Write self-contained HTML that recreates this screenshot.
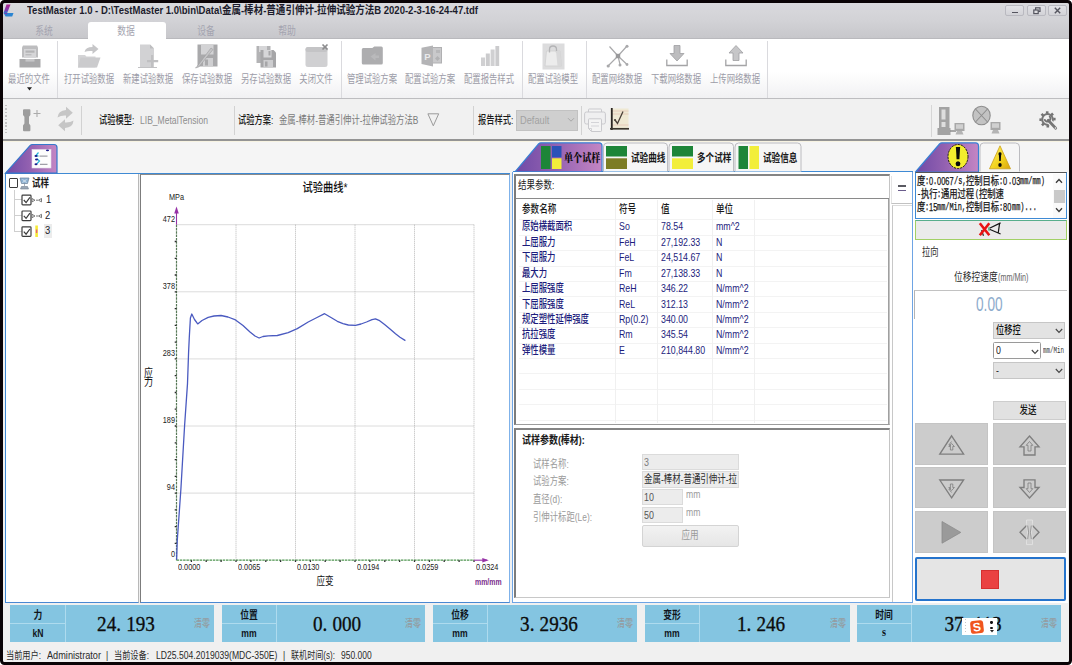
<!DOCTYPE html>
<html lang="zh-CN">
<head>
<meta charset="utf-8">
<title>TestMaster 1.0</title>
<style>
*{box-sizing:border-box;margin:0;padding:0}
html,body{width:1072px;height:665px;overflow:hidden;background:#fff}
body{font-family:"Liberation Sans","Noto Sans CJK SC",sans-serif;font-size:10px;color:#222;position:relative}
#frame{position:absolute;left:0;top:0;width:1071.5px;height:664.5px;border:3px solid #0a0306;border-radius:4.500px;box-shadow:0 0 0 12px #fff;z-index:50;pointer-events:none}
#win{position:absolute;left:0;top:0;width:1072px;height:665px;background:#f0f0f0;overflow:hidden}
#win div,#win span,#win svg{position:absolute}
.t{white-space:nowrap;line-height:1;transform-origin:0 50%}
.c{transform-origin:50% 50%}
.r{transform-origin:100% 50%}
#title{left:0;top:0;width:1072px;height:21px;background:linear-gradient(#dadade,#d2d2d6)}
#tabrow{left:0;top:21px;width:1072px;height:17.500px;background:linear-gradient(#d2d2d6,#c7c7cb);border-bottom:1px solid #b9b9bd}
#ribbon{left:0;top:38.5px;width:1072px;height:60.5px;background:linear-gradient(#fff 55%,#f1f1f3);border-bottom:1px solid #bdbdc0}
.rl{transform-origin:50% 50%;font-size:11px;color:#9c9ca8;transform:translateX(-50%) scaleX(.76);top:74px}
.rsep{top:41px;width:1px;height:57px;background:#dadade}
#tb2{left:0;top:99.5px;width:1072px;height:41.5px;background:#f1f1f1;border-bottom:2px solid #949494}
#tabstrip{left:0;top:141px;width:1072px;height:32px;background:#f5f5f5}
.wb{top:4.5px;width:19px;height:11px;border:1px solid #b9b9c0;border-radius:2px;background:linear-gradient(#e2e2e6,#d2d2d7)}
.tab{transform-origin:50% 50%;font-size:11px;color:#a4a4b0;transform:translateX(-50%) scaleX(.8);top:25.800px;margin-left:-1px}
.num{font-family:'Liberation Serif','Noto Serif CJK SC',serif}
.d{font-style:normal;display:inline-block;width:.52em;text-align:left}
</style>
</head>
<body>
<div id="win">
<div id="title"></div>
<svg style="left:2.200px;top:4px" width="16" height="14" viewBox="0 0 16 14"><defs><linearGradient id="lg1" x1="0" y1="0" x2="0" y2="1"><stop offset="0" stop-color="#b0208c"/><stop offset=".7" stop-color="#7a3ab0"/><stop offset="1" stop-color="#2a7fd0"/></linearGradient></defs><path d="M4.5 0.5 L8.5 0.5 L5.2 9 L1.5 9 Z" fill="url(#lg1)"/><path d="M1.5 9 L5 9 L11.5 9 L10.2 12.5 L3.6 12.5 Z" fill="#2a84d2"/><path d="M1.5 9 L5.2 9 L4.6 10.6 Z" fill="#7a3ab0"/></svg>
<span class="t" style="left:27px;top:5.300px;font-size:11.5px;font-weight:bold;color:#1c1c2c;transform:scaleX(.828)">TestMaster 1.0 - D:\TestMaster 1.0\bin\Data\金属-棒材-普通引伸计-拉伸试验方法B 2020-2-3-16-24-47.tdf</span>
<div class="wb" style="left:1004.5px"><div style="left:6px;top:6px;width:6px;height:1.5px;background:#55555f"></div></div>
<div class="wb" style="left:1026.5px"><svg style="left:5px;top:1px" width="8" height="8" viewBox="0 0 8 8"><rect x="2.6" y="0.8" width="4.4" height="3.6" fill="none" stroke="#55555f" stroke-width="1.2"/><rect x="0.8" y="3" width="4.4" height="3.6" fill="#dcdce0" stroke="#55555f" stroke-width="1.2"/></svg></div>
<div class="wb" style="left:1047.5px"><svg style="left:5.5px;top:1.5px" width="7" height="7" viewBox="0 0 7 7"><path d="M0.8 0.8 L6.2 6.2 M6.2 0.8 L0.8 6.2" stroke="#55555f" stroke-width="1.4"/></svg></div>
<div id="tabrow"></div>
<div style="left:88px;top:21.5px;width:77.5px;height:18px;background:#fff;border-radius:3px 3px 0 0"></div>
<span class="t tab" style="left:45px">系统</span>
<span class="t tab" style="left:127px">数据</span>
<span class="t tab" style="left:207px">设备</span>
<span class="t tab" style="left:288px">帮助</span>
<div id="ribbon"></div>
<div class="rsep" style="left:57px"></div>
<div class="rsep" style="left:340.5px"></div>
<div class="rsep" style="left:521.5px"></div>
<div class="rsep" style="left:586px"></div>
<div class="rsep" style="left:767px"></div>
<!-- ribbon icons -->
<svg style="left:19px;top:44px" width="22" height="25" viewBox="0 0 22 25"><path d="M4 1.5 h14 l1 2 v10 h-16 v-10 z" fill="#bdbdbf"/><rect x="5" y="5" width="12" height="9" fill="#d6d6d8"/><rect x="6.5" y="6.5" width="9" height="2.2" fill="#b4b4b6"/><rect x="6.5" y="10" width="6" height="1.4" fill="#bcbcbe"/><path d="M0.5 15 h21 v8.5 h-21 z" fill="#a8a8aa"/><rect x="6.500" y="15" width="9" height="2.600" fill="#c6c6c8"/></svg>
<svg style="left:27px;top:87px" width="5" height="4" viewBox="0 0 5 4"><path d="M0 0.3 h5 l-2.5 3.2 z" fill="#222"/></svg>
<svg style="left:77px;top:43px" width="25" height="26" viewBox="0 0 25 26"><path d="M1 12 h7 l1.5 1.5 h9 v11 h-17.5 z" fill="#d4d4d6"/><path d="M3.5 14.5 h20 l-3.5 10 h-19 z" fill="#cbcbcd"/><path d="M7.5 9 q1 -5 8 -5 v-3 l6 5 l-6 5 v-3 q-5 -0.5 -8 1 z" fill="#c6c6c8"/></svg>
<svg style="left:137px;top:43px" width="24" height="26" viewBox="0 0 24 26"><path d="M3 1.5 h10 l4 4 v18.5 h-14 z" fill="#d2d2d4"/><path d="M13 1.5 v4 h4 z" fill="#bdbdbf"/><path d="M1 24 h19 v1 h-19 z" fill="#c2c2c4"/><path d="M14 12 v5 h-4 v2.2 h4 v5 h2.2 v-5 h5 v-2.200 h-5 v-5 z" fill="#c0c0c2"/></svg>
<svg style="left:195px;top:43px" width="24" height="26" viewBox="0 0 24 26"><path d="M2.5 1.5 h20 v22 h-20 z" fill="#a9a9ab"/><rect x="6" y="1.500" width="12.500" height="10" fill="#d3d3d5"/><rect x="8" y="15" width="10" height="8.5" fill="#cfcfd1"/><rect x="10" y="16.500" width="3" height="6" fill="#a9a9ab"/><path d="M16 5 L2 23.500 L0.500 25 L4 23.800 L18 6.500 z" fill="#c4c4c6" stroke="#9c9c9e" stroke-width=".6"/></svg>
<svg style="left:255px;top:44px" width="23" height="25" viewBox="0 0 23 25"><path d="M1.500 2 h14 v17 h-14 z" fill="#b3b3b5"/><rect x="4" y="2" width="8" height="6" fill="#d6d6d8"/><path d="M5.500 6 h13 l2.500 2.500 v15 h-15.500 z" fill="#a6a6a8"/><rect x="8.500" y="6" width="8" height="7.500" fill="#d6d6d8"/><rect x="13.500" y="7" width="2" height="4.500" fill="#a6a6a8"/><rect x="8.500" y="16" width="9.500" height="7.500" fill="#cdcdcf"/><rect x="10" y="17.500" width="2.500" height="5" fill="#a6a6a8"/></svg>
<svg style="left:304px;top:43px" width="26" height="26" viewBox="0 0 26 26"><rect x="1.500" y="4" width="22" height="20" rx="2.500" fill="#d0d0d2"/><rect x="1.500" y="4" width="22" height="5" rx="2.500" fill="#c4c4c6"/><path d="M18.500 1.500 L23.500 6.500 M23.500 1.500 L18.500 6.500" stroke="#8c8c8e" stroke-width="1.700"/></svg>
<svg style="left:361px;top:46px" width="23" height="20" viewBox="0 0 23 20"><path d="M0.800 3.500 q0 -1.500 1.500 -1.500 h9 l2 -1.500 h7 q1.500 0 1.500 1.500 v15 q0 1.500 -1.500 1.500 h-18 q-1.500 0 -1.500 -1.500 z" fill="#adadaf"/><path d="M9.500 10.500 l5 -3.500 v2.500 h3.500 v2.500 h-3.500 v2.500 z" fill="#b9b9bb"/></svg>
<svg style="left:420px;top:44px" width="23" height="24" viewBox="0 0 23 24"><rect x="7" y="3.500" width="14.500" height="15.500" fill="#c9c9cb" stroke="#b0b0b2" stroke-width="1"/><path d="M1.500 3.800 L13 1.500 V22.500 L1.500 20 Z" fill="#b4b4b6"/><text x="4.300" y="15.500" font-family="Liberation Sans,sans-serif" font-size="9.500" font-weight="bold" fill="#e9e9eb">P</text><path d="M17.500 12 l2.500 2.500 l-2.500 2.500 l-2.500 -2.500 z" fill="#b2b2b4"/><rect x="16" y="6" width="4" height="3" fill="#b8b8ba"/></svg>
<svg style="left:480px;top:45px" width="20" height="22" viewBox="0 0 20 22"><rect x="1" y="12.500" width="4" height="8.500" fill="#d0d0d2"/><rect x="5.800" y="8.500" width="4" height="12.500" fill="#cbcbcd"/><rect x="10.600" y="4.500" width="4" height="16.500" fill="#d0d0d2"/><rect x="15.400" y="1" width="3.800" height="20" fill="#cbcbcd"/></svg>
<svg style="left:542px;top:43px" width="23" height="27" viewBox="0 0 23 27"><rect x="0.500" y="0.500" width="22" height="26" fill="#dcdcdd"/><path d="M4.500 8 h13.500 l1.500 15 h-16.500 z" fill="#ececec" stroke="#cfcfd0" stroke-width=".8"/><path d="M7.500 9.500 v-3 q0 -3.500 3.500 -3.500 q3.500 0 3.500 3.500 v3" fill="none" stroke="#b4b4b6" stroke-width="1.300"/><path d="M14 8 l4 0 l1.500 15 l-4 0 z" fill="#d8d8d9"/></svg>
<svg style="left:606px;top:44px" width="24" height="24" viewBox="0 0 24 24"><path d="M3.500 2.500 L12 12 L21 2 M12 12 L2 22 M12 12 L14 20.500 M12 12 L20.500 20" stroke="#a9a9ab" stroke-width="1.200" fill="none"/><rect x="9.800" y="9.800" width="4.400" height="4.400" fill="#99999b"/><circle cx="21" cy="2.200" r="1.500" fill="#a9a9ab"/><circle cx="2.200" cy="22" r="1.600" fill="#a9a9ab"/><circle cx="14" cy="21" r="1.500" fill="#a9a9ab"/><circle cx="21" cy="20.500" r="1.400" fill="#a9a9ab"/></svg>
<svg style="left:665px;top:44px" width="24" height="24" viewBox="0 0 24 24"><path d="M9 1.500 h6 v8 h4 l-7 7.500 l-7 -7.500 h4 z" fill="#bdbdbf" stroke="#a0a0a2" stroke-width=".8"/><path d="M1.800 15.500 v6 h20.400 v-6" fill="none" stroke="#a4a4a6" stroke-width="1.300"/></svg>
<svg style="left:724px;top:44px" width="24" height="24" viewBox="0 0 24 24"><path d="M9 16.500 h6 v-7.500 h4 l-7 -7.500 l-7 7.500 h4 z" fill="#c6c6c8" stroke="#a0a0a2" stroke-width=".8"/><path d="M1.800 15.500 v6 h20.400 v-6" fill="none" stroke="#a4a4a6" stroke-width="1.300"/></svg>
<!-- ribbon labels -->
<span class="t rl" style="left:29px">最近的文件</span>
<span class="t rl" style="left:88.800px">打开试验数据</span>
<span class="t rl" style="left:147.800px">新建试验数据</span>
<span class="t rl" style="left:206.700px">保存试验数据</span>
<span class="t rl" style="left:265.700px">另存试验数据</span>
<span class="t rl" style="left:315.900px">关闭文件</span>
<span class="t rl" style="left:371.500px">管理试验方案</span>
<span class="t rl" style="left:430.300px">配置试验方案</span>
<span class="t rl" style="left:489.200px">配置报告样式</span>
<span class="t rl" style="left:553.400px">配置试验模型</span>
<span class="t rl" style="left:617px">配置网络数据</span>
<span class="t rl" style="left:676px">下载网络数据</span>
<span class="t rl" style="left:734.700px">上传网络数据</span>
<div id="tb2"></div>
<div style="left:5px;top:105px;width:2px;height:28px;background:repeating-linear-gradient(#c4c4c4 0 1.500px,transparent 1.500px 3.400px)"></div>
<svg style="left:21px;top:108px" width="22" height="25" viewBox="0 0 22 25"><path d="M2 2.200 q0 -1 1 -1 h5.400 q1 0 1 1 v4.800 l-1.400 1.800 v6.800 l1.400 1.800 v4.800 q0 1 -1 1 h-5.400 q-1 0 -1 -1 v-4.800 l1.400 -1.800 v-6.800 l-1.400 -1.800 z" fill="#9d9d9d"/><path d="M16 2 v7 M12.500 5.500 h7" stroke="#ababab" stroke-width="1.100"/></svg>
<svg style="left:56px;top:106px" width="19" height="26" viewBox="0 0 19 26"><path d="M1.500 11.500 q0.500 -7 8.500 -7.500 v-3.200 l6.800 6 l-6.800 6 v-3.200 q-5 -0.300 -8.500 1.900 z" fill="#c6c6c6"/><path d="M17.500 14.500 q-0.500 7 -8.500 7.500 v3.200 l-6.800 -6 l6.800 -6 v3.200 q5 0.300 8.500 -1.900 z" fill="#c6c6c6"/></svg>
<div style="left:80.500px;top:106px;width:1px;height:29px;background:#d2d2d2"></div>
<span class="t" style="left:99px;top:115px;font-size:11px;color:#1a1a1a;font-weight:500;transform:scaleX(.75)">试验模型:</span>
<span class="t" style="left:140px;top:115px;font-size:10.500px;color:#8e8e8e;transform:scaleX(.815)">LIB_MetalTension</span>
<div style="left:233.500px;top:106px;width:1px;height:29px;background:#d2d2d2"></div>
<span class="t" style="left:238px;top:115px;font-size:11px;color:#1a1a1a;font-weight:500;transform:scaleX(.75)">试验方案:</span>
<span class="t" style="left:279px;top:115px;font-size:11px;color:#7a7a7a;transform:scaleX(.76)">金属-棒材-普通引伸计-拉伸试验方法B</span>
<svg style="left:427px;top:113px" width="13" height="14" viewBox="0 0 13 14"><path d="M0.900 0.800 h10.800 l-5.400 12 z" fill="none" stroke="#9a9a9a" stroke-width="1"/></svg>
<div style="left:473px;top:106px;width:1px;height:29px;background:#d2d2d2"></div>
<span class="t" style="left:477.500px;top:115px;font-size:11px;color:#1a1a1a;font-weight:500;transform:scaleX(.75)">报告样式:</span>
<div style="left:516px;top:109.500px;width:61.500px;height:21px;background:#cfcfcf;border:1px solid #c2c2c2"></div>
<span class="t" style="left:519.500px;top:115px;font-size:11px;color:#a2a2a2;transform:scaleX(.84)">Default</span>
<svg style="left:567px;top:117px" width="8" height="6" viewBox="0 0 8 6"><path d="M1 1.200 l3 3 l3 -3" fill="none" stroke="#a8a8a8" stroke-width="1"/></svg>
<div style="left:580.500px;top:106px;width:1px;height:29px;background:#d2d2d2"></div>
<svg style="left:584px;top:108px" width="22" height="25" viewBox="0 0 22 25"><path d="M4.500 4 v-2.300 q0 -0.700 0.700 -0.700 h11.600 q0.700 0 0.700 0.700 v2.300" fill="#f4f4f4" stroke="#c9c9cd" stroke-width="1"/><rect x="0.600" y="4" width="20.800" height="12" rx="1.800" fill="#efeff0" stroke="#c9c9cd" stroke-width="1"/><path d="M4.500 11.500 q0 -0.700 0.700 -0.700 h11.600 q0.700 0 0.700 0.700 v11.300 q0 0.700 -0.700 0.700 h-9.300 l-3 -3 z" fill="#f4f4f4" stroke="#c9c9cd" stroke-width="1"/><path d="M7 14.500 h8 M7 18 h8" stroke="#d4d4d8" stroke-width="1"/><path d="M4.500 20.500 h3 v3" fill="none" stroke="#c9c9cd" stroke-width=".8"/></svg>
<svg style="left:609px;top:107px" width="21" height="24" viewBox="0 0 21 24"><rect x="1.500" y="1.500" width="18" height="20.500" fill="#efe9d3"/><path d="M3 4 h16.500 M3 7 h16.500 M3 18 h16.500" stroke="#e6c8b8" stroke-width=".9"/><path d="M6 13 L8.500 16.500 L14 4.500" fill="none" stroke="#4a4038" stroke-width="1.300"/><circle cx="6" cy="13" r="1.100" fill="#4a4038"/><path d="M2.800 1 v22" stroke="#2a2622" stroke-width="1.800"/><path d="M1 21.800 h19" stroke="#3a362c" stroke-width="1.700"/></svg>
<!-- right icons -->
<div style="left:931px;top:105px;width:1px;height:32px;background:#d6d6d6"></div>
<svg style="left:936px;top:106px" width="30" height="30" viewBox="0 0 30 30"><path d="M3 1 h10.500 v21 h1 v7 h-13 v-7 h1.500 z" fill="#a3a3a3"/><rect x="5.500" y="3.500" width="4" height="10" fill="#dedede"/><rect x="5.500" y="16" width="4" height="5" fill="#dedede"/><path d="M14 25 h6" stroke="#8c8c8c" stroke-width="1.500"/><rect x="18.500" y="17" width="10" height="8" fill="#a8a8a8"/><rect x="20" y="18.300" width="7" height="4.500" fill="#d0d0d0"/><path d="M21 25 h5 l1.500 3.500 h-8 z" fill="#b4b4b4"/></svg>
<svg style="left:971px;top:105px" width="32" height="31" viewBox="0 0 32 31"><ellipse cx="10.500" cy="10.500" rx="8.700" ry="9.300" fill="#c3c3c3" stroke="#8e8e8e" stroke-width="1.100"/><path d="M4.500 4 L16.500 17 M16.500 4 L4.500 17" stroke="#8e8e8e" stroke-width="1.100"/><rect x="19.500" y="17" width="10" height="8" fill="#a8a8a8"/><rect x="21" y="18.300" width="7" height="4.500" fill="#d0d0d0"/><path d="M22 25 h5 l1.500 3.500 h-8 z" fill="#b4b4b4"/></svg>
<svg style="left:1036px;top:107px" width="26" height="28" viewBox="1036 107 26 28"><g fill="#727272"><rect x="1045.9" y="111.3" width="2.600" height="2.400" transform="rotate(0 1047.5 119.4)"/><rect x="1045.9" y="111.3" width="2.600" height="2.400" transform="rotate(45 1047.5 119.4)"/><rect x="1045.9" y="111.3" width="2.600" height="2.400" transform="rotate(90 1047.5 119.4)"/><rect x="1045.9" y="111.3" width="2.600" height="2.400" transform="rotate(135 1047.5 119.4)"/><rect x="1045.9" y="111.3" width="2.600" height="2.400" transform="rotate(180 1047.5 119.4)"/><rect x="1045.9" y="111.3" width="2.600" height="2.400" transform="rotate(225 1047.5 119.4)"/><rect x="1045.9" y="111.3" width="2.600" height="2.400" transform="rotate(270 1047.5 119.4)"/><rect x="1045.9" y="111.3" width="2.600" height="2.400" transform="rotate(315 1047.5 119.4)"/></g><circle cx="1047.5" cy="119.4" r="5.300" fill="#f1f1f1" stroke="#767676" stroke-width="2"/><path d="M1048.500 120.500 L1055.700 128.200" stroke="#f1f1f1" stroke-width="5.200" stroke-linecap="round"/><path d="M1048.200 120.200 L1055.700 128.200" stroke="#767676" stroke-width="2.800" stroke-linecap="round"/><path d="M1048.800 115.800 a3 3 0 1 1 -4.200 3.600" fill="none" stroke="#727272" stroke-width="1.900" transform="rotate(8 1047 118.500)"/><circle cx="1055.500" cy="128" r=".8" fill="#f1f1f1"/></svg>
<div id="tabstrip"></div>
<div style="left:0;top:141px;width:1072px;height:1px;background:#f7f3e2"></div>
<!-- blue baselines -->
<div style="left:5px;top:172.500px;width:505px;height:1.200px;background:#3f8ad4"></div>
<div style="left:513px;top:171.200px;width:399.500px;height:1.200px;background:#3f8ad4"></div>
<div style="left:914.500px;top:171.500px;width:153px;height:1.200px;background:#3f8ad4"></div>
<svg style="left:0;top:141px" width="1072" height="34" viewBox="0 141 1072 34">
<defs>
<linearGradient id="pg1" x1="0" y1="0" x2="1" y2="0"><stop offset="0" stop-color="#6f4aa6"/><stop offset=".45" stop-color="#9260b0"/><stop offset="1" stop-color="#c486c4"/></linearGradient>
<linearGradient id="wg" x1="0" y1="0" x2="1" y2="1"><stop offset="0" stop-color="#fff36a"/><stop offset=".6" stop-color="#f2d21c"/><stop offset="1" stop-color="#d9a410"/></linearGradient>
</defs>
<!-- left tab -->
<path d="M5.500 173.200 L30 145.600 Q31 144.500 32.500 144.500 H54 Q57 144.500 57 147.500 V173.200 Z" fill="url(#pg1)" stroke="#3578cc" stroke-width="1.200"/>
<rect x="32" y="149.500" width="19" height="18.500" fill="#fdfdfd" stroke="#e4dcec" stroke-width=".6"/>
<g>
<path d="M38.500 152.500 L35.800 155.600 L38.500 156.200" fill="none" stroke="#22b4d8" stroke-width="1.200"/>
<path d="M37 158.700 L39.500 161 L36.500 164.200" fill="none" stroke="#22b4d8" stroke-width="1.200"/>
<ellipse cx="36" cy="156" rx="1.500" ry="1" fill="#1c1c8c"/><ellipse cx="36.500" cy="159.500" rx="1.500" ry="1" fill="#1c1c8c"/><ellipse cx="36" cy="164.300" rx="1.500" ry="1" fill="#1c1c8c"/><ellipse cx="47.500" cy="150.300" rx="1.600" ry="0.900" fill="#1c1c8c"/>
<path d="M39.500 156.200 H47.500 M40 164.300 H47.500" stroke="#a0a0a8" stroke-width="1.200"/>
</g>
<!-- middle tabs: inactive first -->
<g fill="#f6f6f6" stroke="#bcbcc0" stroke-width="1">
<path d="M603.500 171.500 V147 Q603.500 143 607 143 H664 Q667.500 143 667.500 146.500 V171.500"/>
<path d="M669 171.500 V147 Q669 143 672.500 143 H730 Q733.500 143 733.500 146.500 V171.500"/>
<path d="M735 171.500 V147 Q735 143 738.500 143 H797.500 Q801 143 801 146.500 V171.500"/>
</g>
<path d="M515 171.800 L538.500 144 Q539.500 142.800 541 142.800 H599 Q602 142.800 602 145.800 V171.800 Z" fill="url(#pg1)" stroke="#3a80d4" stroke-width="1.200"/>
<rect x="541" y="146" width="9.500" height="23" fill="#1d8538"/><rect x="552" y="146" width="9.500" height="11.300" fill="#2a52b8"/><rect x="552" y="158.300" width="9.500" height="10.700" fill="#f2ee3a"/>
<rect x="606" y="146" width="21" height="10.500" fill="#1d8538"/><rect x="606" y="158.300" width="21" height="10.700" fill="#7c7c24"/>
<rect x="672" y="146" width="21" height="10.500" fill="#1d8538"/><rect x="672" y="158.300" width="21" height="10.700" fill="#f2ee3a"/>
<rect x="738.500" y="146" width="9.500" height="23" fill="#1d8538"/><rect x="749.500" y="146" width="9.500" height="23" fill="#f2ee3a"/>
<!-- right tabs -->
<path d="M980 171.500 V147 Q980 143 983.500 143 H1015.500 Q1019.500 143 1019.500 147 V171.500" fill="#f6f6f6" stroke="#bcbcc0" stroke-width="1"/>
<path d="M915.500 172 L939.500 144 Q940.500 142.800 942 142.800 H975.500 Q978.500 142.800 978.500 145.800 V172 Z" fill="url(#pg1)" stroke="#3a80d4" stroke-width="1.200"/>
<ellipse cx="958" cy="156.500" rx="10" ry="12" fill="#f4ee2e" stroke="#1a1a10" stroke-width="1" stroke-dasharray="2.200 1"/>
<path d="M955.900 147 h4.200 l-0.700 12.300 h-2.800 z" fill="#0a0a0a"/><ellipse cx="958" cy="163.800" rx="2.400" ry="2.500" fill="#0a0a0a"/>
<path d="M1000 145.800 L1010.500 168.800 H989.500 Z" fill="url(#wg)" stroke="#caa018" stroke-width=".8" stroke-linejoin="round"/>
<path d="M998.800 152.500 h2.400 l-0.400 8.500 h-1.600 z" fill="#0a0a0a"/><circle cx="1000" cy="154" r="1.500" fill="#0a0a0a"/><ellipse cx="1000" cy="165" rx="1.700" ry="1.900" fill="#0a0a0a"/>
</svg>
<span class="t" style="left:564px;top:152.500px;font-size:11.500px;font-weight:900;color:#0a0a0a;font-family:'Liberation Serif','Noto Serif CJK SC',serif;transform:scaleX(.79)">单个试样</span>
<span class="t" style="left:631px;top:152.500px;font-size:11px;font-weight:bold;color:#1a1a1a;transform:scaleX(.78)">试验曲线</span>
<span class="t" style="left:697px;top:152.500px;font-size:11px;font-weight:bold;color:#1a1a1a;transform:scaleX(.78)">多个试样</span>
<span class="t" style="left:763px;top:152.500px;font-size:11px;font-weight:bold;color:#1a1a1a;transform:scaleX(.78)">试验信息</span>
<!-- left tree panel -->
<div style="left:5px;top:173.700px;width:133.500px;height:429.300px;background:#fff;border-left:1.200px solid #3f8ad4;border-bottom:1.500px solid #4a88d2;border-right:1px solid #b8b8b8"></div>
<div style="left:13.500px;top:190px;width:1px;height:41.500px;background:#cfcfcf"></div>
<div style="left:13.500px;top:199px;width:8px;height:1px;background:#cfcfcf"></div>
<div style="left:13.500px;top:215px;width:8px;height:1px;background:#cfcfcf"></div>
<div style="left:13.500px;top:231px;width:8px;height:1px;background:#cfcfcf"></div>
<div style="left:8.800px;top:177.800px;width:9px;height:10.200px;border:1.200px solid #3c3c3c;background:#fff;border-radius:1px"></div>
<svg style="left:18.500px;top:177px" width="11" height="13" viewBox="0 0 11 13"><path d="M1 1 h9 l-1.500 5.500 h-6 z" fill="#8fb4d4" stroke="#6a7f98" stroke-width=".7"/><path d="M3.500 2.500 l4 3 M7.500 2.500 l-4 3" stroke="#e8eef4" stroke-width=".7"/><path d="M5.500 6.500 v2.500 M2.500 9.500 h6 l1 2.500 h-8 z" fill="#9aa6b4" stroke="#74808e" stroke-width=".6"/></svg>
<span class="t" style="left:31.800px;top:177.500px;font-size:11.500px;font-weight:bold;color:#1a1a1a;transform:scaleX(.74)">试样</span>
<svg style="left:21px;top:193.500px" width="32" height="44" viewBox="0 0 32 44"><g fill="#fff" stroke="#3c3c3c" stroke-width="1.200"><rect x="1" y="1.200" width="9" height="9.600" rx=".8"/><rect x="1" y="17" width="9" height="9.600" rx=".8"/><rect x="1" y="32.800" width="9" height="9.600" rx=".8"/></g><g fill="none" stroke="#3c3c3c" stroke-width="1.200"><path d="M2.800 6 l2.300 2.600 l3.800 -5.200"/><path d="M2.800 21.800 l2.300 2.600 l3.800 -5.200"/><path d="M2.800 37.600 l2.300 2.600 l3.800 -5.200"/></g><g fill="none" stroke="#6c6c6c" stroke-width=".9"><path d="M11 4.500 l3 1.700 l-3 1.700 z M15 6.200 h2 M20.500 4.500 l-3 1.700 l3 1.700 z"/><path d="M11 20.300 l3 1.700 l-3 1.700 z M15 22 h2 M20.500 20.300 l-3 1.700 l3 1.700 z"/></g><rect x="14.300" y="31.500" width="2.600" height="11.500" fill="#f6ea38"/><rect x="14.900" y="35.500" width="1.400" height="3.500" fill="#e8607c"/></svg>
<div style="left:43.500px;top:224px;width:8px;height:13.500px;background:#ececec"></div>
<span class="t" style="left:45.500px;top:193.800px;font-size:11.500px;color:#1c1c2a;transform:scaleX(.82)">1</span>
<span class="t" style="left:45px;top:209.600px;font-size:11.500px;color:#1c1c2a;transform:scaleX(.82)">2</span>
<span class="t" style="left:45px;top:225.300px;font-size:11.500px;color:#1c1c2a;transform:scaleX(.82)">3</span>
<!-- splitter & chart panel -->
<!-- chart panel -->
<div style="left:140px;top:174px;width:369.500px;height:428.500px;background:#fff;border-left:1.500px solid #7c7c7c;border-top:1.200px solid #8a8a8a;border-right:1.200px solid #7fb2ea;border-bottom:1.500px solid #4a88d2"></div>
<svg style="left:141px;top:175px" width="368" height="426" viewBox="141 175 368 426">
<path d="M236.0 224.7 V560.2 M295.5 224.7 V560.2 M355.0 224.7 V560.2 M414.5 224.7 V560.2 M474.0 224.7 V560.2 M176.5 493.1 H474.0 M176.5 426.0 H474.0 M176.5 358.9 H474.0 M176.5 291.8 H474.0 M176.5 224.7 H474.0" stroke="#a6a6a6" stroke-width="0.8" stroke-dasharray="1 1" fill="none"/>
<path d="M176.5 224.7 V560.2" stroke="#587a58" stroke-width="1.200" stroke-dasharray="2.500 .8"/>
<path d="M176.5 560.2 H474.0" stroke="#4f9550" stroke-width="1.200" stroke-dasharray="2.500 .8"/>
<path d="M191.4 560.2 v1.800 M206.2 560.2 v1.800 M221.1 560.2 v1.800 M236.0 560.2 v1.800 M250.9 560.2 v1.800 M265.8 560.2 v1.800 M280.6 560.2 v1.800 M295.5 560.2 v1.800 M310.4 560.2 v1.800 M325.2 560.2 v1.800 M340.1 560.2 v1.800 M355.0 560.2 v1.800 M369.9 560.2 v1.800 M384.8 560.2 v1.800 M399.6 560.2 v1.800 M414.5 560.2 v1.800 M429.4 560.2 v1.800 M444.2 560.2 v1.800 M459.1 560.2 v1.800 M474.0 560.2 v1.800 M176.5 543.4 h-1.800 M176.5 526.7 h-1.800 M176.5 509.9 h-1.800 M176.5 493.1 h-1.800 M176.5 476.3 h-1.800 M176.5 459.6 h-1.800 M176.5 442.8 h-1.800 M176.5 426.0 h-1.800 M176.5 409.2 h-1.800 M176.5 392.5 h-1.800 M176.5 375.7 h-1.800 M176.5 358.9 h-1.800 M176.5 342.1 h-1.800 M176.5 325.4 h-1.800 M176.5 308.6 h-1.800 M176.5 291.8 h-1.800 M176.5 275.0 h-1.800 M176.5 258.3 h-1.800 M176.5 241.5 h-1.800" stroke="#2c2c2c" stroke-width="1.300"/>
<path d="M176.5 224.7 V208" stroke="#9632a6" stroke-width="1.100"/><path d="M176.5 206.500 l2.300 7 h-4.600 z" fill="#9632a6"/>
<path d="M474.0 560.2 H487" stroke="#9632a6" stroke-width="1.100"/><path d="M488.800 560.2 l-6.500 2.300 v-4.600 z" fill="#9632a6"/>
<path d="M176.6 559.7 L177.3 540.0 L180.9 489.0 L184.6 425.5 L187.5 383.6 L188.6 352.0 L189.3 337.3 L190.4 318.0 L191.8 314.0 L194.5 319.5 L197.7 323.9 L202.0 320.5 L208.2 317.3 L214.0 316.0 L221.0 315.5 L228.0 317.0 L235.5 319.9 L243.0 325.5 L250.0 331.9 L255.0 336.0 L259.1 338.0 L263.0 336.5 L268.2 335.9 L277.3 335.5 L288.2 332.6 L297.3 328.6 L308.2 322.0 L317.0 317.5 L324.6 313.7 L331.0 317.5 L337.3 321.3 L343.0 323.6 L348.3 325.0 L355.5 325.3 L361.0 324.0 L366.5 322.0 L372.0 319.6 L375.5 318.8 L379.0 320.3 L384.6 324.6 L390.0 329.0 L395.5 333.7 L400.0 337.2 L405.4 340.6" fill="none" stroke="#4a5ac0" stroke-width="1.300" stroke-linejoin="round"/>
</svg>
<span class="t r" style="left:175.0px;top:549.2px;font-size:9.5px;color:#222;transform:translateX(-100%) scaleX(0.77)">0</span>
<span class="t r" style="left:175.0px;top:482.1px;font-size:9.5px;color:#222;transform:translateX(-100%) scaleX(0.77)">94</span>
<span class="t r" style="left:175.0px;top:415.0px;font-size:9.5px;color:#222;transform:translateX(-100%) scaleX(0.77)">189</span>
<span class="t r" style="left:175.0px;top:347.9px;font-size:9.5px;color:#222;transform:translateX(-100%) scaleX(0.77)">283</span>
<span class="t r" style="left:175.0px;top:280.8px;font-size:9.5px;color:#222;transform:translateX(-100%) scaleX(0.77)">378</span>
<span class="t r" style="left:175.0px;top:213.7px;font-size:9.5px;color:#222;transform:translateX(-100%) scaleX(0.77)">472</span>
<span class="t" style="left:178.0px;top:562.200px;font-size:9.5px;color:#222;transform:scaleX(0.77)">0.0000</span>
<span class="t" style="left:237.5px;top:562.200px;font-size:9.5px;color:#222;transform:scaleX(0.77)">0.0065</span>
<span class="t" style="left:297.0px;top:562.200px;font-size:9.5px;color:#222;transform:scaleX(0.77)">0.0130</span>
<span class="t" style="left:356.5px;top:562.200px;font-size:9.5px;color:#222;transform:scaleX(0.77)">0.0194</span>
<span class="t" style="left:416.0px;top:562.200px;font-size:9.5px;color:#222;transform:scaleX(0.77)">0.0259</span>
<span class="t" style="left:475.5px;top:562.200px;font-size:9.5px;color:#222;transform:scaleX(0.77)">0.0324</span>
<span class="t" style="left:168.8px;top:192.3px;font-size:9.5px;color:#222;transform:scaleX(0.77)">MPa</span>
<span class="t" style="left:475.0px;top:578px;font-size:9px;color:#7a2c8c;font-weight:bold;transform:scaleX(.77)">mm/mm</span>
<span class="t c" style="left:324.9px;top:181.800px;font-size:12.5px;font-weight:500;color:#111;transform:translateX(-50%) scaleX(.82)">试验曲线*</span>
<span class="t c" style="left:324.6px;top:576px;font-size:11px;color:#111;transform:translateX(-50%) scaleX(0.78)">应变</span>
<span class="t" style="left:143.500px;top:369px;font-size:11.500px;color:#111;transform:scaleX(.78);line-height:8.500px;white-space:normal;width:12px">应<br>力</span>
<!-- middle panel -->
<div style="left:512.300px;top:172px;width:400.700px;height:431px;border:1.500px solid #6ea4e4;border-top:none;background:#fff"></div>
<div style="left:514px;top:173.700px;width:376px;height:251.300px;background:#fff;border-left:2.300px solid #7c7c7c;border-top:2.300px solid #848484;border-right:1.500px solid #c4c4c4;border-bottom:1.500px solid #9c9c9c"></div>
<div style="left:890.500px;top:176px;width:21px;height:27.500px;background:#fff;border-bottom:1.500px solid #c2c2c2;border-left:1px solid #e4e4e4"></div>
<div style="left:897.500px;top:185.300px;width:8.500px;height:1.300px;background:#5a5a62"></div>
<div style="left:897.500px;top:189.500px;width:8.500px;height:1.300px;background:#6a5c8c"></div>
<div style="left:891.500px;top:205px;width:20px;height:397px;background:#fff;border-left:1.500px solid #c8c8c8;border-top:1px solid #dcdcdc"></div>
<span class="t" style="left:518.0px;top:179.5px;font-size:11px;color:#222;transform:scaleX(0.77)">结果参数:</span>
<div style="left:516px;top:197.500px;width:372.500px;height:1.500px;background:#8a8a8a"></div>
<div style="left:887.500px;top:199px;width:1.500px;height:225px;background:#a0a0a0"></div>
<div style="left:519px;top:219.3px;width:368px;height:1px;background:#f3f3f3"></div>
<div style="left:519px;top:234.7px;width:368px;height:1px;background:#f3f3f3"></div>
<div style="left:519px;top:250.1px;width:368px;height:1px;background:#f3f3f3"></div>
<div style="left:519px;top:265.5px;width:368px;height:1px;background:#f3f3f3"></div>
<div style="left:519px;top:280.9px;width:368px;height:1px;background:#f3f3f3"></div>
<div style="left:519px;top:296.3px;width:368px;height:1px;background:#f3f3f3"></div>
<div style="left:519px;top:311.7px;width:368px;height:1px;background:#f3f3f3"></div>
<div style="left:519px;top:327.1px;width:368px;height:1px;background:#f3f3f3"></div>
<div style="left:519px;top:342.5px;width:368px;height:1px;background:#f3f3f3"></div>
<div style="left:519px;top:357.9px;width:368px;height:1px;background:#f3f3f3"></div>
<div style="left:519px;top:373.3px;width:368px;height:1px;background:#f3f3f3"></div>
<div style="left:519px;top:388.7px;width:368px;height:1px;background:#f3f3f3"></div>
<div style="left:519px;top:404.1px;width:368px;height:1px;background:#f3f3f3"></div>
<div style="left:519px;top:419.5px;width:368px;height:1px;background:#f3f3f3"></div>
<div style="left:615.0px;top:200px;width:1px;height:223px;background:#f0f0f0"></div>
<div style="left:657.0px;top:200px;width:1px;height:223px;background:#f0f0f0"></div>
<div style="left:712.0px;top:200px;width:1px;height:223px;background:#f0f0f0"></div>
<div style="left:754.0px;top:200px;width:1px;height:223px;background:#f0f0f0"></div>
<span class="t" style="left:522.0px;top:204.0px;font-size:11px;color:#1a1a1a;font-weight:500;transform:scaleX(0.78)">参数名称</span>
<span class="t" style="left:619.0px;top:204.0px;font-size:11px;color:#1a1a1a;font-weight:500;transform:scaleX(0.78)">符号</span>
<span class="t" style="left:661.0px;top:204.0px;font-size:11px;color:#1a1a1a;font-weight:500;transform:scaleX(0.78)">值</span>
<span class="t" style="left:716.0px;top:204.0px;font-size:11px;color:#1a1a1a;font-weight:500;transform:scaleX(0.78)">单位</span>
<span class="t" style="left:522.0px;top:221.4px;font-size:11px;color:#1c1c7c;font-weight:500;transform:scaleX(0.76)">原始横截面积</span>
<span class="t" style="left:619.0px;top:221.4px;font-size:10.5px;color:#1c1c7c;transform:scaleX(0.84)">So</span>
<span class="t" style="left:661.0px;top:221.4px;font-size:10.5px;color:#1c1c7c;transform:scaleX(0.84)">78.54</span>
<span class="t" style="left:716.0px;top:221.4px;font-size:10.5px;color:#1c1c7c;transform:scaleX(0.84)">mm^2</span>
<span class="t" style="left:522.0px;top:236.8px;font-size:11px;color:#1c1c7c;font-weight:500;transform:scaleX(0.76)">上屈服力</span>
<span class="t" style="left:619.0px;top:236.8px;font-size:10.5px;color:#1c1c7c;transform:scaleX(0.84)">FeH</span>
<span class="t" style="left:661.0px;top:236.8px;font-size:10.5px;color:#1c1c7c;transform:scaleX(0.84)">27,192.33</span>
<span class="t" style="left:716.0px;top:236.8px;font-size:10.5px;color:#1c1c7c;transform:scaleX(0.84)">N</span>
<span class="t" style="left:522.0px;top:252.3px;font-size:11px;color:#1c1c7c;font-weight:500;transform:scaleX(0.76)">下屈服力</span>
<span class="t" style="left:619.0px;top:252.3px;font-size:10.5px;color:#1c1c7c;transform:scaleX(0.84)">FeL</span>
<span class="t" style="left:661.0px;top:252.3px;font-size:10.5px;color:#1c1c7c;transform:scaleX(0.84)">24,514.67</span>
<span class="t" style="left:716.0px;top:252.3px;font-size:10.5px;color:#1c1c7c;transform:scaleX(0.84)">N</span>
<span class="t" style="left:522.0px;top:267.7px;font-size:11px;color:#1c1c7c;font-weight:500;transform:scaleX(0.76)">最大力</span>
<span class="t" style="left:619.0px;top:267.7px;font-size:10.5px;color:#1c1c7c;transform:scaleX(0.84)">Fm</span>
<span class="t" style="left:661.0px;top:267.7px;font-size:10.5px;color:#1c1c7c;transform:scaleX(0.84)">27,138.33</span>
<span class="t" style="left:716.0px;top:267.7px;font-size:10.5px;color:#1c1c7c;transform:scaleX(0.84)">N</span>
<span class="t" style="left:522.0px;top:283.1px;font-size:11px;color:#1c1c7c;font-weight:500;transform:scaleX(0.76)">上屈服强度</span>
<span class="t" style="left:619.0px;top:283.1px;font-size:10.5px;color:#1c1c7c;transform:scaleX(0.84)">ReH</span>
<span class="t" style="left:661.0px;top:283.1px;font-size:10.5px;color:#1c1c7c;transform:scaleX(0.84)">346.22</span>
<span class="t" style="left:716.0px;top:283.1px;font-size:10.5px;color:#1c1c7c;transform:scaleX(0.84)">N/mm^2</span>
<span class="t" style="left:522.0px;top:298.6px;font-size:11px;color:#1c1c7c;font-weight:500;transform:scaleX(0.76)">下屈服强度</span>
<span class="t" style="left:619.0px;top:298.6px;font-size:10.5px;color:#1c1c7c;transform:scaleX(0.84)">ReL</span>
<span class="t" style="left:661.0px;top:298.6px;font-size:10.5px;color:#1c1c7c;transform:scaleX(0.84)">312.13</span>
<span class="t" style="left:716.0px;top:298.6px;font-size:10.5px;color:#1c1c7c;transform:scaleX(0.84)">N/mm^2</span>
<span class="t" style="left:522.0px;top:314.0px;font-size:11px;color:#1c1c7c;font-weight:500;transform:scaleX(0.76)">规定塑性延伸强度</span>
<span class="t" style="left:619.0px;top:314.0px;font-size:10.5px;color:#1c1c7c;transform:scaleX(0.84)">Rp(0.2)</span>
<span class="t" style="left:661.0px;top:314.0px;font-size:10.5px;color:#1c1c7c;transform:scaleX(0.84)">340.00</span>
<span class="t" style="left:716.0px;top:314.0px;font-size:10.5px;color:#1c1c7c;transform:scaleX(0.84)">N/mm^2</span>
<span class="t" style="left:522.0px;top:329.4px;font-size:11px;color:#1c1c7c;font-weight:500;transform:scaleX(0.76)">抗拉强度</span>
<span class="t" style="left:619.0px;top:329.4px;font-size:10.5px;color:#1c1c7c;transform:scaleX(0.84)">Rm</span>
<span class="t" style="left:661.0px;top:329.4px;font-size:10.5px;color:#1c1c7c;transform:scaleX(0.84)">345.54</span>
<span class="t" style="left:716.0px;top:329.4px;font-size:10.5px;color:#1c1c7c;transform:scaleX(0.84)">N/mm^2</span>
<span class="t" style="left:522.0px;top:344.8px;font-size:11px;color:#1c1c7c;font-weight:500;transform:scaleX(0.76)">弹性模量</span>
<span class="t" style="left:619.0px;top:344.8px;font-size:10.5px;color:#1c1c7c;transform:scaleX(0.84)">E</span>
<span class="t" style="left:661.0px;top:344.8px;font-size:10.5px;color:#1c1c7c;transform:scaleX(0.84)">210,844.80</span>
<span class="t" style="left:716.0px;top:344.8px;font-size:10.5px;color:#1c1c7c;transform:scaleX(0.84)">N/mm^2</span>
<div style="left:514px;top:428px;width:376px;height:169.500px;background:#fff;border-left:2.300px solid #7c7c7c;border-top:2.300px solid #848484;border-right:1.500px solid #c4c4c4;border-bottom:1.500px solid #c8c8c8"></div>
<span class="t" style="left:521.8px;top:434.5px;font-size:11.5px;color:#1a1a1a;font-weight:bold;transform:scaleX(0.78)">试样参数(棒材):</span>
<span class="t" style="left:532.5px;top:459.2px;font-size:11px;color:#9a9a9a;transform:scaleX(0.76)">试样名称:</span>
<span class="t" style="left:532.5px;top:475.8px;font-size:11px;color:#9a9a9a;transform:scaleX(0.76)">试验方案:</span>
<span class="t" style="left:532.5px;top:493.7px;font-size:11px;color:#9a9a9a;transform:scaleX(0.76)">直径(d):</span>
<span class="t" style="left:532.5px;top:511.5px;font-size:11px;color:#9a9a9a;transform:scaleX(0.76)">引伸计标距(Le):</span>
<div style="left:641.5px;top:453.5px;width:97.0px;height:16.0px;background:#ececec;border:1px solid #dbdbdb"></div>
<div style="left:641.5px;top:471.3px;width:97.0px;height:16.4px;background:#ececec;border:1px solid #dbdbdb"></div>
<div style="left:641.5px;top:488.7px;width:41.0px;height:16.0px;background:#ececec;border:1px solid #dbdbdb"></div>
<div style="left:641.5px;top:506.5px;width:41.0px;height:16.0px;background:#ececec;border:1px solid #dbdbdb"></div>
<span class="t" style="left:644.0px;top:456.5px;font-size:10.5px;color:#7c7c7c;transform:scaleX(0.85)">3</span>
<span class="t" style="left:643.5px;top:474.0px;font-size:11.5px;color:#2c2c2c;transform:scaleX(0.735)">金属-棒材-普通引伸计-拉</span>
<span class="t" style="left:644.0px;top:492.0px;font-size:10.5px;color:#555;transform:scaleX(0.85)">10</span>
<span class="t" style="left:644.0px;top:509.5px;font-size:10.5px;color:#555;transform:scaleX(0.85)">50</span>
<span class="t" style="left:686.3px;top:489.0px;font-size:10.5px;color:#9a9a9a;transform:scaleX(0.82)">mm</span>
<span class="t" style="left:686.3px;top:506.5px;font-size:10.5px;color:#9a9a9a;transform:scaleX(0.82)">mm</span>
<div style="left:641.500px;top:524.500px;width:97px;height:22.500px;background:linear-gradient(#f2f2f2,#e6e6e6);border:1px solid #d4d4d4;border-radius:2px"></div>
<span class="t c" style="left:690.0px;top:530.0px;font-size:11px;color:#9a9a9a;transform:translateX(-50%) scaleX(0.78)">应用</span>
<!-- right panel -->
<div style="left:913px;top:172px;width:155px;height:431px;background:#fff"></div>
<div style="left:914.500px;top:172px;width:152.500px;height:47px;background:#fff;border:1.300px solid #3f8ad4;border-top:1.500px solid #555"></div>
<div style="left:1052.500px;top:174px;width:13px;height:43.500px;background:#fafafa"></div>
<div style="left:1054px;top:190px;width:10.500px;height:13px;background:#c9c9c9"></div>
<svg style="left:1055px;top:177.500px" width="8" height="6" viewBox="0 0 8 6"><path d="M1 4.800 l3 -3.300 l3 3.300" fill="none" stroke="#3a3a3a" stroke-width="1.300"/></svg>
<svg style="left:1055px;top:207px" width="8" height="6" viewBox="0 0 8 6"><path d="M1 1.200 l3 3.300 l3 -3.300" fill="none" stroke="#3a3a3a" stroke-width="1.300"/></svg>
<span class="t" style="left:916.5px;top:175.5px;font-size:11px;color:#141414;-webkit-text-stroke:.25px #141414;transform:scaleX(.753)">度</span>
<span class="t" style="left:924.8px;top:175.5px;font-size:11px;color:#141414;-webkit-text-stroke:.25px #141414;font-family:'Liberation Mono',monospace;transform:scaleX(.627)">:</span>
<span class="t" style="left:928.9px;top:175.5px;font-size:11px;color:#141414;-webkit-text-stroke:.25px #141414;transform:scaleX(.677)">0</span>
<span class="t" style="left:933.1px;top:175.5px;font-size:11px;color:#141414;-webkit-text-stroke:.25px #141414;font-family:'Liberation Mono',monospace;transform:scaleX(.627)">.</span>
<span class="t" style="left:937.2px;top:175.5px;font-size:11px;color:#141414;-webkit-text-stroke:.25px #141414;transform:scaleX(.677)">0067</span>
<span class="t" style="left:953.8px;top:175.5px;font-size:11px;color:#141414;-webkit-text-stroke:.25px #141414;font-family:'Liberation Mono',monospace;transform:scaleX(.627)">/s,</span>
<span class="t" style="left:966.2px;top:175.5px;font-size:11px;color:#141414;-webkit-text-stroke:.25px #141414;transform:scaleX(.753)">控制目标</span>
<span class="t" style="left:999.3px;top:175.5px;font-size:11px;color:#141414;-webkit-text-stroke:.25px #141414;font-family:'Liberation Mono',monospace;transform:scaleX(.627)">:</span>
<span class="t" style="left:1003.4px;top:175.5px;font-size:11px;color:#141414;-webkit-text-stroke:.25px #141414;transform:scaleX(.677)">0</span>
<span class="t" style="left:1007.6px;top:175.5px;font-size:11px;color:#141414;-webkit-text-stroke:.25px #141414;font-family:'Liberation Mono',monospace;transform:scaleX(.627)">.</span>
<span class="t" style="left:1011.7px;top:175.5px;font-size:11px;color:#141414;-webkit-text-stroke:.25px #141414;transform:scaleX(.677)">03</span>
<span class="t" style="left:1020.0px;top:175.5px;font-size:11px;color:#141414;-webkit-text-stroke:.25px #141414;font-family:'Liberation Mono',monospace;transform:scaleX(.627)">mm/mm)</span>
<span class="t" style="left:916.5px;top:189.0px;font-size:11px;color:#141414;-webkit-text-stroke:.25px #141414;font-family:'Liberation Mono',monospace;transform:scaleX(.627)">-</span>
<span class="t" style="left:920.6px;top:189.0px;font-size:11px;color:#141414;-webkit-text-stroke:.25px #141414;transform:scaleX(.753)">执行</span>
<span class="t" style="left:937.2px;top:189.0px;font-size:11px;color:#141414;-webkit-text-stroke:.25px #141414;font-family:'Liberation Mono',monospace;transform:scaleX(.627)">:</span>
<span class="t" style="left:941.3px;top:189.0px;font-size:11px;color:#141414;-webkit-text-stroke:.25px #141414;transform:scaleX(.753)">通用过程</span>
<span class="t" style="left:974.5px;top:189.0px;font-size:11px;color:#141414;-webkit-text-stroke:.25px #141414;font-family:'Liberation Mono',monospace;transform:scaleX(.627)">(</span>
<span class="t" style="left:978.6px;top:189.0px;font-size:11px;color:#141414;-webkit-text-stroke:.25px #141414;transform:scaleX(.753)">控制速</span>
<span class="t" style="left:916.5px;top:202.0px;font-size:11px;color:#141414;-webkit-text-stroke:.25px #141414;transform:scaleX(.753)">度</span>
<span class="t" style="left:924.8px;top:202.0px;font-size:11px;color:#141414;-webkit-text-stroke:.25px #141414;font-family:'Liberation Mono',monospace;transform:scaleX(.627)">:</span>
<span class="t" style="left:928.9px;top:202.0px;font-size:11px;color:#141414;-webkit-text-stroke:.25px #141414;transform:scaleX(.677)">15</span>
<span class="t" style="left:937.2px;top:202.0px;font-size:11px;color:#141414;-webkit-text-stroke:.25px #141414;font-family:'Liberation Mono',monospace;transform:scaleX(.627)">mm/Min,</span>
<span class="t" style="left:966.2px;top:202.0px;font-size:11px;color:#141414;-webkit-text-stroke:.25px #141414;transform:scaleX(.753)">控制目标</span>
<span class="t" style="left:999.3px;top:202.0px;font-size:11px;color:#141414;-webkit-text-stroke:.25px #141414;font-family:'Liberation Mono',monospace;transform:scaleX(.627)">:</span>
<span class="t" style="left:1003.4px;top:202.0px;font-size:11px;color:#141414;-webkit-text-stroke:.25px #141414;transform:scaleX(.677)">80</span>
<span class="t" style="left:1011.7px;top:202.0px;font-size:11px;color:#141414;-webkit-text-stroke:.25px #141414;font-family:'Liberation Mono',monospace;transform:scaleX(.627)">mm)...</span>
<div style="left:914.500px;top:219.500px;width:152px;height:20px;background:#ebebeb;border:1.300px solid #a2d066;border-top-color:#58ae8c"></div>
<svg style="left:977px;top:221px" width="26" height="17" viewBox="977 221 26 17"><path d="M989.500 228.300 L1000.600 222.900 M989.500 229.300 L1000.600 234 M999.600 223.300 L998.200 233.200" fill="none" stroke="#161616" stroke-width="1.200"/><path d="M989.300 226.800 q-1.300 2 0 4.200" stroke="#58b88c" stroke-width="1.300" fill="none"/><path d="M981.500 230.300 l2 5.500" stroke="#222" stroke-width="1.200"/><path d="M979.800 223.300 L989.300 235.300 M989.300 223.300 L979.800 235.300" stroke="#e81414" stroke-width="2.600"/></svg>
<span class="t" style="left:922.4px;top:247.0px;font-size:11px;color:#2a2a2a;transform:scaleX(0.75)">拉向</span>
<span class="t" style="left:953.8px;top:272.0px;font-size:11.5px;color:#2a2a2a;transform:scaleX(0.76)">位移控速度</span>
<span class="t" style="left:997.6px;top:273.0px;font-size:10px;color:#666;transform:scaleX(0.72)">(mm/Min)</span>
<div style="left:913.800px;top:289.500px;width:153px;height:29px;border-top:1.300px solid #c2c2c2;border-left:1.300px solid #b4b4b4"></div>
<span class="t" style="left:976.2px;top:294.5px;font-size:19.5px;color:#8eaccc;transform:scaleX(0.7)">0.00</span>
<div style="left:993px;top:322px;width:72.300px;height:17px;background:#e3e3e3;border:1px solid #c6c6c6"></div>
<span class="t" style="left:995.6px;top:324.8px;font-size:11.5px;color:#111;font-weight:500;transform:scaleX(0.715)">位移控</span>
<svg style="left:1055.0px;top:327.5px" width="8" height="6" viewBox="0 0 8 6"><path d="M0.800 1 l3.200 3.400 l3.200 -3.400" fill="none" stroke="#444" stroke-width="1.100"/></svg>
<div style="left:992.800px;top:342.300px;width:48.300px;height:17.200px;background:#fff;border:1.200px solid #9a9a9a;border-radius:1.500px"></div>
<span class="t" style="left:995.8px;top:345.0px;font-size:11px;color:#222;transform:scaleX(0.8)">0</span>
<svg style="left:1031.0px;top:348.5px" width="8" height="6" viewBox="0 0 8 6"><path d="M0.800 1 l3.200 3.400 l3.200 -3.400" fill="none" stroke="#444" stroke-width="1.100"/></svg>
<span class="t" style="left:1043px;top:345.500px;font-size:9.500px;color:#333;font-family:'Liberation Mono',monospace;transform:scaleX(.613)">mm/Min</span>
<div style="left:993px;top:362px;width:72.300px;height:17px;background:#e3e3e3;border:1px solid #c6c6c6"></div>
<span class="t" style="left:996.0px;top:365.0px;font-size:11px;color:#222;transform:scaleX(0.8)">-</span>
<svg style="left:1055.0px;top:367.5px" width="8" height="6" viewBox="0 0 8 6"><path d="M0.800 1 l3.200 3.400 l3.200 -3.400" fill="none" stroke="#444" stroke-width="1.100"/></svg>
<div style="left:992.500px;top:401px;width:73.500px;height:18.800px;background:#e1e1e1;border:1px solid #cdcdcd"></div>
<span class="t c" style="left:1027.7px;top:404.8px;font-size:11.5px;color:#1a1a1a;font-weight:500;transform:translateX(-50%) scaleX(0.74)">发送</span>
<div style="left:915.2px;top:423.2px;width:72.6px;height:42.1px;background:#cccccc;border:1px solid #c4c4c4"></div>
<div style="left:915.2px;top:467.4px;width:72.6px;height:41.0px;background:#cccccc;border:1px solid #c4c4c4"></div>
<div style="left:915.2px;top:511.0px;width:72.6px;height:42.0px;background:#cccccc;border:1px solid #c4c4c4"></div>
<div style="left:992.6px;top:423.2px;width:73.2px;height:42.1px;background:#cccccc;border:1px solid #c4c4c4"></div>
<div style="left:992.6px;top:467.4px;width:73.2px;height:41.0px;background:#cccccc;border:1px solid #c4c4c4"></div>
<div style="left:992.6px;top:511.0px;width:73.2px;height:42.0px;background:#cccccc;border:1px solid #c4c4c4"></div>
<svg style="left:915px;top:423px" width="152" height="131" viewBox="915 423 152 131"><g fill="none" stroke="#7e7e7e" stroke-width="1.350">
<path d="M951.600 435.800 L963.600 454.100 H939.800 Z"/><path d="M951.600 441.500 l-2.800 3.500 h1.600 v1.500 l-1.600 0 l2.800 -3 l2.800 3 h-1.600 v3.500 h-2.400 v-3.500" stroke-width=".8"/>
<path d="M1029.500 436 L1039 446.800 H1035 V455 H1024 V446.800 H1020 Z"/><path d="M1029.500 441.500 l-3.300 3.800 h1.800 v5.700 h3 v-5.700 h1.800 z" stroke-width=".8"/>
<path d="M951.600 497.900 L963.600 480 H939.800 Z"/><path d="M951.600 492.500 l-2.800 -3.500 h1.600 v-1.500 l-1.600 0 l2.800 3 l2.800 -3 h-1.600 v-3.500 h-2.400 v3.500" stroke-width=".8"/>
<path d="M1029.500 498 L1039 487.500 H1035 V479.800 H1024 V487.500 H1020 Z"/><path d="M1029.500 492.500 l-3.300 -3.800 h1.800 v-5.700 h3 v5.700 h1.800 z" stroke-width=".8"/>
<path d="M1029.500 522.500 L1039 532.300 L1029.500 542.300 L1020 532.300 Z"/>
<path d="M1026.500 520 h6 v3.500 q-2.200 8.800 0 17.600 v3.500 h-6 v-3.500 q2.200 -8.800 0 -17.600 z" fill="#cfcfcf" stroke="#e2e2e2" stroke-width=".9"/><path d="M1027.700 525.500 q1.700 6.800 0 13.600 M1031.300 525.500 q-1.700 6.800 0 13.600" stroke="#8a8a8a" stroke-width=".8"/>
</g><path d="M942 521.500 L960.800 532.400 L942 543.200 Z" fill="#9a9a9a" stroke="#8c8c8c" stroke-width=".8"/></svg>
<div style="left:914.800px;top:557.200px;width:151.500px;height:44px;background:#e5e5e5;border:2px solid #2473cc;border-radius:2px"></div>
<div style="left:981px;top:569.500px;width:18.300px;height:19.500px;background:#ea4242;border:1px solid #d43030"></div>
<!-- bottom readouts -->
<div style="left:10.3px;top:605.300px;width:203.9px;height:36.900px;background:#84c5e1"></div>
<div style="left:65.0px;top:605.300px;width:1px;height:36.900px;background:#aedbee"></div>
<div style="left:10.3px;top:623.300px;width:55.2px;height:1px;background:#aedbee"></div>
<span class="t c" style="left:37.9px;top:609.5px;font-size:11px;color:#10151c;font-weight:bold;transform:translateX(-50%) scaleX(0.8)">力</span>
<span class="t c" style="left:37.9px;top:627.5px;font-size:10.5px;color:#10151c;font-weight:bold;transform:translateX(-50%) scaleX(0.82)">kN</span>
<span class="t c num" style="-webkit-text-stroke:.35px #0c0c0c;left:126.3px;top:612.5px;font-size:22px;color:#0c0c0c;transform:translateX(-50%) scaleX(0.87)">24<i class="d">.</i>193</span>
<span class="t r" style="left:209.9px;top:619.0px;font-size:10px;font-weight:500;color:#949ca0;transform:translateX(-100%) scaleX(0.8)">清零</span>
<div style="left:221.8px;top:605.300px;width:203.2px;height:36.900px;background:#84c5e1"></div>
<div style="left:275.8px;top:605.300px;width:1px;height:36.900px;background:#aedbee"></div>
<div style="left:221.8px;top:623.300px;width:54.5px;height:1px;background:#aedbee"></div>
<span class="t c" style="left:249.1px;top:609.5px;font-size:11px;color:#10151c;font-weight:bold;transform:translateX(-50%) scaleX(0.8)">位置</span>
<span class="t c" style="left:249.1px;top:627.5px;font-size:10.5px;color:#10151c;font-weight:bold;transform:translateX(-50%) scaleX(0.82)">mm</span>
<span class="t c num" style="-webkit-text-stroke:.35px #0c0c0c;left:337.1px;top:612.5px;font-size:22px;color:#0c0c0c;transform:translateX(-50%) scaleX(0.87)">0<i class="d">.</i>000</span>
<span class="t r" style="left:420.7px;top:619.0px;font-size:10px;font-weight:500;color:#949ca0;transform:translateX(-100%) scaleX(0.8)">清零</span>
<div style="left:433.0px;top:605.300px;width:204.0px;height:36.900px;background:#84c5e1"></div>
<div style="left:487.2px;top:605.300px;width:1px;height:36.900px;background:#aedbee"></div>
<div style="left:433.0px;top:623.300px;width:54.7px;height:1px;background:#aedbee"></div>
<span class="t c" style="left:460.4px;top:609.5px;font-size:11px;color:#10151c;font-weight:bold;transform:translateX(-50%) scaleX(0.8)">位移</span>
<span class="t c" style="left:460.4px;top:627.5px;font-size:10.5px;color:#10151c;font-weight:bold;transform:translateX(-50%) scaleX(0.82)">mm</span>
<span class="t c num" style="-webkit-text-stroke:.35px #0c0c0c;left:548.9px;top:612.5px;font-size:22px;color:#0c0c0c;transform:translateX(-50%) scaleX(0.87)">3<i class="d">.</i>2936</span>
<span class="t r" style="left:632.7px;top:619.0px;font-size:10px;font-weight:500;color:#949ca0;transform:translateX(-100%) scaleX(0.8)">清零</span>
<div style="left:645.0px;top:605.300px;width:205.0px;height:36.900px;background:#84c5e1"></div>
<div style="left:699.0px;top:605.300px;width:1px;height:36.900px;background:#aedbee"></div>
<div style="left:645.0px;top:623.300px;width:54.5px;height:1px;background:#aedbee"></div>
<span class="t c" style="left:672.2px;top:609.5px;font-size:11px;color:#10151c;font-weight:bold;transform:translateX(-50%) scaleX(0.8)">变形</span>
<span class="t c" style="left:672.2px;top:627.5px;font-size:10.5px;color:#10151c;font-weight:bold;transform:translateX(-50%) scaleX(0.82)">mm</span>
<span class="t c num" style="-webkit-text-stroke:.35px #0c0c0c;left:761.2px;top:612.5px;font-size:22px;color:#0c0c0c;transform:translateX(-50%) scaleX(0.87)">1<i class="d">.</i>246</span>
<span class="t r" style="left:845.7px;top:619.0px;font-size:10px;font-weight:500;color:#949ca0;transform:translateX(-100%) scaleX(0.8)">清零</span>
<div style="left:856.9px;top:605.300px;width:204.3px;height:36.900px;background:#84c5e1"></div>
<div style="left:911.4px;top:605.300px;width:1px;height:36.900px;background:#aedbee"></div>
<div style="left:856.9px;top:623.300px;width:55.0px;height:1px;background:#aedbee"></div>
<span class="t c" style="left:884.4px;top:609.5px;font-size:11px;color:#10151c;font-weight:bold;transform:translateX(-50%) scaleX(0.8)">时间</span>
<span class="t c" style="left:884.4px;top:627.0px;font-size:11.5px;color:#10151c;font-weight:bold;font-family:'Liberation Serif',serif;transform:translateX(-50%) scaleX(0.9)">s</span>
<span class="t c num" style="-webkit-text-stroke:.35px #0c0c0c;left:973.0px;top:612.5px;font-size:22px;color:#0c0c0c;transform:translateX(-50%) scaleX(0.87)">37<i class="d">.</i>113</span>
<span class="t r" style="left:1056.9px;top:619.0px;font-size:10px;font-weight:500;color:#949ca0;transform:translateX(-100%) scaleX(0.8)">清零</span>
<div style="left:962.300px;top:617.500px;width:34.600px;height:17.300px;background:#fff"></div>
<div style="left:964.500px;top:619px;width:1px;height:14px;background:repeating-linear-gradient(#c8c8c8 0 1px,transparent 1px 3px)"></div>
<svg style="left:969.500px;top:619.500px" width="14" height="14" viewBox="0 0 14 14"><rect x=".5" y=".5" width="13" height="13" rx="3" fill="#f0551e" transform="rotate(-6 7 7)"/><text x="7" y="11.300" text-anchor="middle" font-family="Liberation Sans,sans-serif" font-weight="bold" font-size="12" fill="#fff" transform="rotate(-8 7 7)">S</text></svg>
<div style="left:990.300px;top:621.300px;width:2.300px;height:2.300px;background:#111;border-radius:50%"></div>
<div style="left:990.300px;top:627px;width:2.300px;height:2.300px;background:#111;border-radius:50%"></div>
<svg style="left:989.500px;top:630px" width="4" height="3" viewBox="0 0 4 3"><path d="M0 0 h4 l-2 2.500 z" fill="#222"/></svg>
<div style="left:0;top:644px;width:1072px;height:21px;background:#f0f0f0"></div>
<span class="t" style="left:6.0px;top:649.500px;font-size:10.5px;color:#2a2a2a;transform:scaleX(0.779)">当前用户:</span>
<span class="t" style="left:47.0px;top:649.500px;font-size:10.5px;color:#2a2a2a;transform:scaleX(0.873)">Administrator</span>
<span class="t" style="left:106.3px;top:649.500px;font-size:10.5px;color:#2a2a2a;transform:scaleX(0.800)">|</span>
<span class="t" style="left:114.0px;top:649.500px;font-size:10.5px;color:#2a2a2a;transform:scaleX(0.779)">当前设备:</span>
<span class="t" style="left:155.5px;top:649.500px;font-size:10.5px;color:#2a2a2a;transform:scaleX(0.818)">LD25.504.2019039(MDC-350E)</span>
<span class="t" style="left:282.6px;top:649.500px;font-size:10.5px;color:#2a2a2a;transform:scaleX(0.800)">|</span>
<span class="t" style="left:290.7px;top:649.500px;font-size:10.5px;color:#2a2a2a;transform:scaleX(0.768)">联机时间(s):</span>
<span class="t" style="left:340.7px;top:649.500px;font-size:10.5px;color:#2a2a2a;transform:scaleX(0.806)">950.000</span>
</div>
<div id="frame"></div>
</body>
</html>
